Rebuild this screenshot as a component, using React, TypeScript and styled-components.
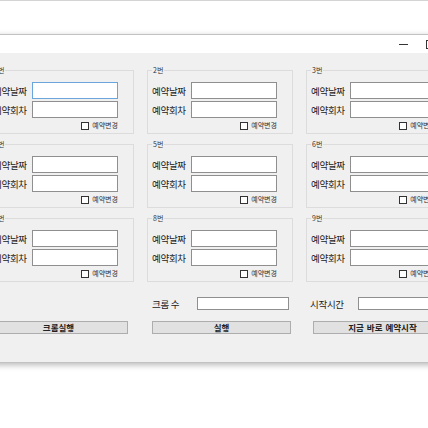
import React from 'react';
import styled, { createGlobalStyle } from 'styled-components';

const GlobalStyle = createGlobalStyle`
  html, body {
    margin: 0;
    padding: 0;
    background: #ffffff;
    overflow: hidden;
  }
  body {
    font-family: "Noto Sans CJK KR", "Noto Sans", sans-serif;
    color: #1e1e1e;
  }
`;

const Page = styled.div`
  width: 428px;
  height: 428px;
  overflow: hidden;
  box-sizing: border-box;
  border-top: 1px solid #d4d4d4;
  padding-top: 33px;
`;

const Window = styled.div`
  margin-left: -20px;
  width: 500px;
  border: 1px solid #c2c2c2;
  background: #f0f0f0;
  box-shadow: 0 2px 6px rgba(0, 0, 0, 0.28);
`;

const TitleBar = styled.div`
  height: 18px;
  background: #ffffff;
  display: flex;
  justify-content: flex-end;
  padding-right: 10px;
`;

const Control = styled.div`
  width: 27px;
  height: 18px;
  display: flex;
  align-items: center;
  justify-content: center;
`;

const MinIcon = styled.div`
  width: 9px;
  height: 1px;
  background: #333;
`;

const MaxIcon = styled.div`
  width: 7px;
  height: 7px;
  border: 1px solid #333;
`;

const CloseIcon = styled.div`
  font-size: 10px;
  line-height: 10px;
  color: #333;
`;

const Client = styled.div`
  padding: 13px 0 28px 7px;
`;

const Grid = styled.div`
  display: grid;
  grid-template-columns: repeat(3, 146px);
  column-gap: 13px;
  row-gap: 6px;
`;

const Group = styled.fieldset`
  margin: 0;
  min-width: 0;
  border: 1px solid #dcdcdc;
  padding: 8px 15px 3px 4px;
  height: 68px;
  box-sizing: border-box;
`;

const Caption = styled.legend`
  padding: 0 1px;
  margin-left: 0;
  font-size: 7px;
  line-height: 8px;
  color: #333;
`;

const Field = styled.div`
  display: flex;
  align-items: center;
  height: 17px;
  & + & {
    margin-top: 2px;
  }
`;

const Label = styled.span<{ $width: number }>`
  width: ${({ $width }) => $width}px;
  flex: none;
  font-size: 9.5px;
  line-height: 10px;
  letter-spacing: -0.3px;
  white-space: nowrap;
  color: #1a1a1a;
`;

const TextBox = styled.input<{ $focused?: boolean; $width: number; $height: number }>`
  width: ${({ $width }) => $width}px;
  height: ${({ $height }) => $height}px;
  box-sizing: border-box;
  margin: 0;
  padding: 0 2px;
  border: 1px solid ${({ $focused }) => ($focused ? '#6aa6dc' : '#8f8f8f')};
  background: #ffffff;
  outline: none;
  font-size: 8px;
  font-family: inherit;
`;

const CheckRow = styled.label`
  margin-top: 3px;
  height: 9px;
  display: flex;
  align-items: center;
  justify-content: flex-end;
  gap: 3px;
  font-size: 7px;
  line-height: 9px;
  color: #333;
`;

const Box = styled.span`
  width: 8px;
  height: 8px;
  box-sizing: border-box;
  border: 1px solid #333;
  background: #fff;
`;

const Bottom = styled.div`
  margin-top: 15px;
  display: grid;
  grid-template-columns: repeat(3, 146px);
  column-gap: 13px;
  row-gap: 11px;
`;

const Cell = styled.div<{ $inset: number }>`
  display: flex;
  align-items: center;
  height: 13px;
  padding-left: ${({ $inset }) => $inset}px;
`;

const Button = styled.button`
  flex: none;
  width: 139px;
  height: 13px;
  box-sizing: border-box;
  margin: 0;
  padding: 0;
  border: 1px solid #adadad;
  background: #e1e1e1;
  font-family: inherit;
  font-size: 8.5px;
  line-height: 11px;
  font-weight: 700;
  color: #222;
  word-spacing: 1px;
`;

const groups = [1, 2, 3, 4, 5, 6, 7, 8, 9];

const ReservationGroup = ({ no }: { no: number }) => (
  <Group>
    <Caption>{no}번</Caption>
    <Field>
      <Label $width={39}>예약날짜</Label>
      <TextBox $width={86} $height={17} $focused={no === 1} />
    </Field>
    <Field>
      <Label $width={39}>예약회차</Label>
      <TextBox $width={86} $height={17} />
    </Field>
    <CheckRow>
      <Box />
      예약변경
    </CheckRow>
  </Group>
);

const App = () => (
  <>
    <GlobalStyle />
    <Page>
      <Window>
        <TitleBar>
          <Control>
            <MinIcon />
          </Control>
          <Control>
            <MaxIcon />
          </Control>
          <Control>
            <CloseIcon>✕</CloseIcon>
          </Control>
        </TitleBar>
        <Client>
          <Grid>
            {groups.map((no) => (
              <ReservationGroup key={no} no={no} />
            ))}
          </Grid>
          <Bottom>
            <Cell $inset={0} />
            <Cell $inset={5}>
              <Label $width={45}>크롬 수</Label>
              <TextBox $width={92} $height={13} />
            </Cell>
            <Cell $inset={4}>
              <Label $width={48}>시작시간</Label>
              <TextBox $width={92} $height={13} />
            </Cell>
            <Cell $inset={1}>
              <Button>크롬실행</Button>
            </Cell>
            <Cell $inset={5}>
              <Button>실행</Button>
            </Cell>
            <Cell $inset={7}>
              <Button>지금 바로 예약시작</Button>
            </Cell>
          </Bottom>
        </Client>
      </Window>
    </Page>
  </>
);

export default App;
